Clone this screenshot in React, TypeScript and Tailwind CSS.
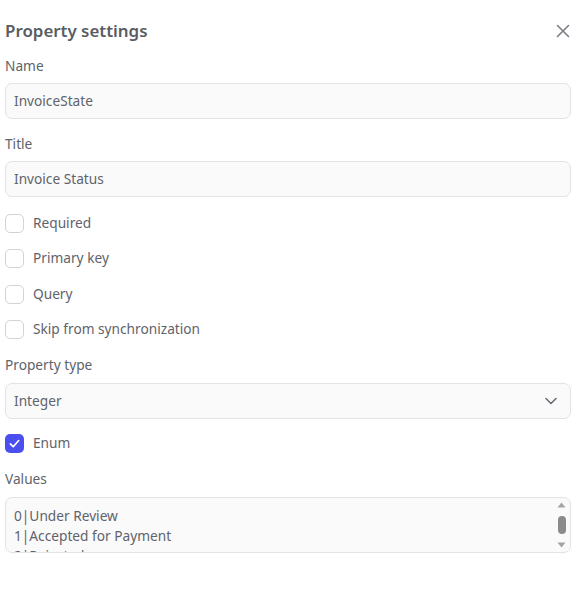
import React from "react";

function Checkbox({ checked, label }: { checked?: boolean; label: string }) {
  return (
    <label className="flex items-center gap-[9px] h-5">
      {checked ? (
        <span className="w-[19px] h-[19px] rounded-[5px] bg-[#4b4ff0] flex items-center justify-center">
          <svg width="13" height="13" viewBox="0 0 14 14" fill="none">
            <path d="M2.5 7.5 L5.6 10.5 L11.5 3.8" stroke="white" strokeWidth="1.8" strokeLinecap="round" strokeLinejoin="round" />
          </svg>
        </span>
      ) : (
        <span className="w-[19px] h-[19px] rounded-[5px] border-[1.5px] border-[#d1d3d8] bg-white" />
      )}
      <span className="text-[13.7px] text-[#5f636a]">{label}</span>
    </label>
  );
}

function Field({ label, children }: { label: string; children: React.ReactNode }) {
  return (
    <div className="flex flex-col gap-[7px]">
      <div className="text-[13.7px] leading-5 text-[#5f636a]">{label}</div>
      {children}
    </div>
  );
}

function Input({ value }: { value: string }) {
  return (
    <div className="h-9 rounded-[7px] border border-[#e2e3e6] bg-[#fafafa] px-2 pt-[1px] flex items-center text-[13.7px] text-[#5f636a]">
      {value}
    </div>
  );
}

export default function App() {
  return (
    <div
      className="w-[580px] h-[599px] bg-white pl-[5px] pr-[9px] pt-[17px]"
      style={{ fontFamily: "'Noto Sans', sans-serif" }}
    >
      <div className="flex items-center justify-between h-7">
        <h2 className="text-[16.9px] font-semibold text-[#595d63]">Property settings</h2>
        <svg width="14" height="14" viewBox="0 0 14 14" className="mr-[1px]">
          <path d="M1.5 1.5 L12.5 12.5 M12.5 1.5 L1.5 12.5" stroke="#7a7e85" strokeWidth="1.6" strokeLinecap="round" />
        </svg>
      </div>
      <div className="flex flex-col gap-[15px] mt-[11px]">
        <Field label="Name">
          <Input value="InvoiceState" />
        </Field>
        <Field label="Title">
          <Input value="Invoice Status" />
        </Field>
        <div className="flex flex-col gap-[15.5px] mt-[1px]">
          <Checkbox label="Required" />
          <Checkbox label="Primary key" />
          <Checkbox label="Query" />
          <Checkbox label="Skip from synchronization" />
        </div>
        <div className="flex flex-col gap-[8px]">
          <div className="text-[13.7px] leading-5 text-[#5f636a]">Property type</div>
          <div className="h-9 rounded-[7px] border border-[#e2e3e6] bg-[#fafafa] pl-2 pr-3 pt-[1px] flex items-center justify-between text-[13.7px] text-[#5f636a]">
            <span>Integer</span>
            <svg width="14" height="14" viewBox="0 0 14 14" fill="none">
              <path d="M2 4.5 L7 9.5 L12 4.5" stroke="#6b6f76" strokeWidth="1.6" strokeLinecap="round" strokeLinejoin="round" />
            </svg>
          </div>
        </div>
        <Checkbox checked label="Enum" />
        <div className="flex flex-col gap-[8px]">
          <div className="text-[13.7px] leading-5 text-[#5f636a]">Values</div>
          <div className="relative h-14 rounded-[7px] border border-[#e2e3e6] bg-[#fafafa] overflow-hidden">
            <div className="px-2 pt-[8px] pr-6 text-[13.7px] leading-5 text-[#5f636a] whitespace-pre">
              {"0|Under Review\n1|Accepted for Payment\n2|Rejected\n3|Paid"}
            </div>
            <div className="absolute right-[4px] top-[4px] bottom-[4px] w-[9px] flex flex-col items-center justify-between">
              <svg width="9" height="6" viewBox="0 0 9 6"><path d="M4.5 0.5 L8.5 5.5 L0.5 5.5 Z" fill="#a3a3a3" /></svg>
              <div className="w-[8px] h-[18px] rounded-full bg-[#8a8a8a]" />
              <svg width="9" height="6" viewBox="0 0 9 6"><path d="M0.5 0.5 L8.5 0.5 L4.5 5.5 Z" fill="#a3a3a3" /></svg>
            </div>
          </div>
        </div>
      </div>
    </div>
  );
}
